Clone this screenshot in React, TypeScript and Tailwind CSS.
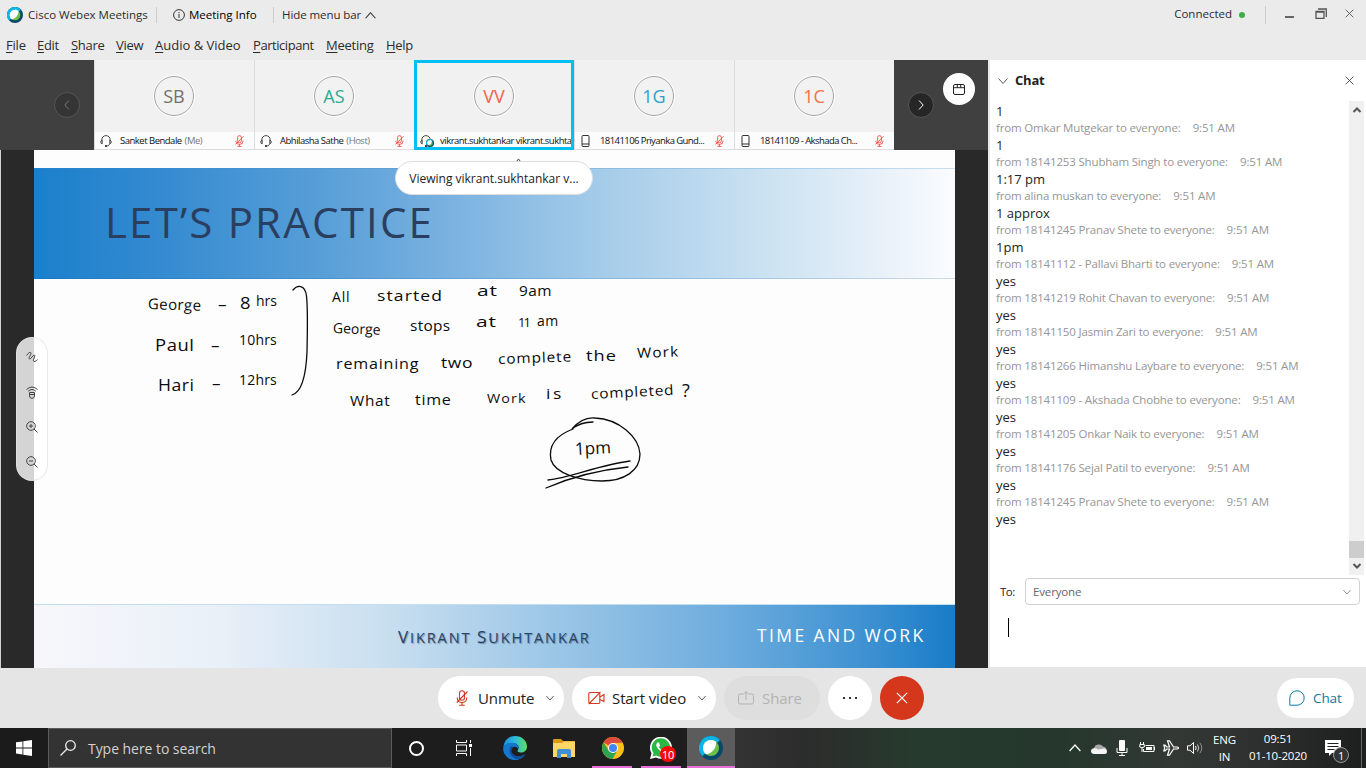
import React from "react";

type IconProps = { className?: string };

const WebexLogo = ({ className }: IconProps) => (
  <svg viewBox="0 0 24 24" className={className}>
    <circle cx="12" cy="12" r="12" fill="#07486b" />
    <path d="M12 0A12 12 0 0 0 3.2 20.2L21 4A12 12 0 0 0 12 0Z" fill="#0ab6e8" />
    <circle cx="12" cy="12" r="8" fill="#6cc04a" />
    <path d="M4 12a8 8 0 0 1 8-8c2.500 0 4.500 1 5 2 1 5-4 12-10 12.200C5 17 4 14.500 4 12Z" fill="#fff" />
  </svg>
);

const Chevron = ({ className, d }: IconProps & { d: string }) => (
  <svg viewBox="0 0 10 10" className={className} fill="none" stroke="currentColor">
    <path d={d} />
  </svg>
);
const UP = "M0.500 7.500 5 2.500 9.500 7.500";
const DOWN = "M0.500 2.500 5 7.500 9.500 2.500";
const LEFT = "M7 0.500 2.800 5 7 9.500";
const RIGHT = "M3 0.500 7.200 5 3 9.500";
const CROSS = "M0.700 0.700 9.300 9.300M9.300 0.700 0.700 9.300";

const Mic = ({ className }: IconProps) => (
  <svg viewBox="0 0 12 16" className={className} fill="none" stroke="currentColor" strokeWidth="1.100">
    <rect x="3.500" y="0.800" width="5" height="9.500" rx="2.500" />
    <path d="M1.300 7.500v1A4.700 4 0 0 0 10.700 8.500v-1M6 12.500V15M3.200 15.200h5.600M0.800 12.500 11.500 1.500" />
  </svg>
);

const Headset = ({ className }: IconProps) => (
  <svg viewBox="0 0 12 12" className={className} fill="none" stroke="currentColor">
    <path d="M1.800 6V4.800a4.200 4.200 0 0 1 8.400 0V6" />
    <path d="M2.200 5.200C.3 5.200.3 8.800 2.200 8.800ZM9.800 5.200c1.900 0 1.900 3.600 0 3.600ZM9.600 8.800C9 10.500 8 11 6.500 11" />
    <path d="M5 11h2" strokeWidth="1.800" />
  </svg>
);

const Phone = ({ className }: IconProps) => (
  <svg viewBox="0 0 9 12" className={className} fill="none" stroke="currentColor">
    <rect x="1" y="0.500" width="7" height="11" rx="1" />
    <path d="M1 9h7" />
  </svg>
);

type Person = {
  initials: string;
  color: string;
  name: string;
  role?: string;
  device: "headset" | "phone";
  active?: boolean;
};

const people: Person[] = [
  { initials: "SB", color: "text-[#707070]", name: "Sanket Bendale", role: "(Me)", device: "headset" },
  { initials: "AS", color: "text-[#2bab8f]", name: "Abhilasha Sathe", role: "(Host)", device: "headset" },
  { initials: "VV", color: "text-[#f5604f]", name: "vikrant.sukhtankar vikrant.sukhta...", device: "headset", active: true },
  { initials: "1G", color: "text-[#2f9fd8]", name: "18141106 Priyanka Gund...", device: "phone" },
  { initials: "1C", color: "text-[#fa7343]", name: "18141109 - Akshada Ch...", device: "phone" },
];

const Tile = ({ p }: { p: Person }) => (
  <div className="relative flex h-[90px] w-40 shrink-0 flex-col border-b border-l border-[#dcdcdc] bg-[#f1f1f1]">
    <div className="flex h-[72px] items-center justify-center pr-px">
      <div className="flex size-10 items-center justify-center rounded-full border border-[#a5a5a5] bg-[#f2f2f2] ring-1 ring-white">
        <span className={`text-[18px] leading-none ${p.color}`}>{p.initials}</span>
      </div>
    </div>
    <div className="flex h-[17px] items-center bg-[#fcfcfc] pt-px pr-[10px] pl-[5px] text-[#111]">
      {p.device === "headset" ? (
        <Headset className="size-3 shrink-0 text-[#444]" />
      ) : (
        <Phone className="ml-px h-3 w-[9px] shrink-0 text-[#333]" />
      )}
      <span
        className={
          p.device === "phone"
            ? "ml-[10px] pt-px text-[9.500px] tracking-[-0.570px] whitespace-nowrap"
            : "ml-[8px] pt-px text-[9.500px] tracking-[-0.500px] whitespace-nowrap"
        }
      >
        {p.name} {p.role && <span className="ml-px text-[#777]">{p.role}</span>}
      </span>
      {!p.active && <Mic className="ml-auto h-3 w-[9px] shrink-0 text-[#f0413c]" />}
    </div>
    {p.active && (
      <>
        <WebexLogo className="absolute bottom-[2px] left-[11px] size-[8px]" />
        <div className="absolute inset-0 -bottom-px -left-px border-[3px] border-[#00bff2]" />
      </>
    )}
  </div>
);

const ink: [string, string][] = [
  ["George", "left-[114px] top-[143px] text-[15px] tracking-[0.400px] rotate-2"],
  ["–", "left-[184px] top-[144px] text-[17px]"],
  ["8", "left-[206px] top-[143px] text-[16px] scale-x-115"],
  ["hrs", "left-[222px] top-[141px] text-[14px]"],
  ["Paul", "left-[121px] top-[185px] text-[16px] scale-x-115 tracking-[0.500px]"],
  ["–", "left-[177px] top-[185px] text-[17px]"],
  ["10hrs", "left-[205px] top-[180px] text-[14px] tracking-[0.200px]"],
  ["Hari", "left-[124px] top-[225px] text-[16px] scale-x-110 tracking-[0.500px]"],
  ["–", "left-[178px] top-[223px] text-[17px]"],
  ["12hrs", "left-[205px] top-[220px] text-[14px] tracking-[0.200px]"],
  ["All", "left-[298px] top-[137px] text-[14px] tracking-[0.800px]"],
  ["started", "left-[343px] top-[136px] text-[14px] scale-x-125 tracking-[0.900px]"],
  ["at", "left-[443px] top-[131px] text-[14px] scale-x-150 tracking-[0.600px]"],
  ["9am", "left-[485px] top-[131px] text-[14px] scale-x-110 tracking-[0.400px]"],
  ["George", "left-[299px] top-[168px] text-[14px] rotate-2"],
  ["stops", "left-[376px] top-[166px] text-[14px] scale-x-110 tracking-[0.300px]"],
  ["at", "left-[442px] top-[162px] text-[14px] scale-x-150 tracking-[0.600px]"],
  ["11", "left-[484px] top-[162px] text-[13px] tracking-[-2px]"],
  ["am", "left-[503px] top-[161px] text-[14px] tracking-[0.500px]"],
  ["remaining", "left-[302px] top-[204px] text-[14px] scale-x-115 tracking-[0.700px]"],
  ["two", "left-[407px] top-[203px] text-[14px] scale-x-125 tracking-[0.500px]"],
  ["complete", "left-[464px] top-[199px] text-[14px] scale-x-110 tracking-[0.800px] -rotate-2"],
  ["the", "left-[552px] top-[196px] text-[14px] scale-x-130 tracking-[0.800px]"],
  ["Work", "left-[603px] top-[193px] text-[14px] scale-x-110 tracking-[1px] -rotate-2"],
  ["What", "left-[316px] top-[241px] text-[14px] scale-x-110 tracking-[0.600px]"],
  ["time", "left-[381px] top-[240px] text-[14px] scale-x-115 tracking-[0.600px]"],
  ["Work", "left-[453px] top-[238px] text-[13px] scale-x-110 tracking-[1px]"],
  ["is", "left-[512px] top-[234px] text-[14px] scale-x-125 tracking-[2px]"],
  ["completed", "left-[557px] top-[234px] text-[14px] scale-x-110 tracking-[0.700px] -rotate-3"],
  ["?", "left-[648px] top-[230px] text-[18px]"],
  ["1pm", "left-[541px] top-[289px] text-[17px] -rotate-3"],
];

const Slide = () => (
  <div className="relative flex w-[921px] shrink-0 flex-col bg-[#fdfdfd]">
    <div className="h-[18px]" />
    <div className="flex h-[111px] items-center bg-[linear-gradient(90deg,#1a80cc_0%,#3189d0_12%,#559dd7_30%,#7cb3e1_46%,#a3cbe9_61%,#c8e0f1_78%,#eaf2fa_93%,#fbfcfe_100%)] pb-[4px] pl-[71px] shadow-[inset_0_1px_0_rgba(60,140,200,0.25),inset_0_-1px_0_rgba(20,90,160,0.2)]">
      <h1 className="text-[42px] leading-none tracking-[2.200px] whitespace-nowrap text-[#2a3f60]">LET’S PRACTICE</h1>
    </div>
    <div className="flex-1" />
    <div className="flex h-[64px] items-center border-t border-[#c5deef] bg-[linear-gradient(90deg,#f7f7fb_0%,#e9f0f8_20%,#c9dff0_38%,#9dc7e7_56%,#6eadde_75%,#3f92d2_90%,#187cc8_100%)] text-[#2b4363]">
      <div className="ml-[364px] w-[359px] text-[14.500px] leading-none tracking-[1.900px] whitespace-nowrap [text-shadow:1px_1px_1px_rgba(40,70,110,0.5)]">
        <span className="text-[17px]">V</span>IKRANT <span className="text-[17px]">S</span>UKHTANKAR
      </div>
      <div className="pb-px text-[17.500px] leading-none tracking-[2.400px] whitespace-nowrap text-white">TIME AND WORK</div>
    </div>
    {ink.map(([word, cls], i) => (
      <span key={i} className={`absolute origin-left leading-[20px] font-medium whitespace-nowrap text-[#0b0b0b] ${cls}`}>
        {word}
      </span>
    ))}
    <svg className="absolute top-0 left-0" width="921" height="518" fill="none" stroke="#0b0b0b" strokeWidth="1.300" strokeLinecap="round">
      <path d="M259 140C263 135 271 134 272.500 146C274 160 273.500 175 273 202C272 225 268 242 258 245" />
      <path d="M539 279C523 285 514 295 517 310C521 323 545 331 568 331C590 331 606 321 606 304C605 287 585 269 561 268C551 267 543 273 538 279C544 274 552 272 559 272" />
      <path d="M514 330C535 328 565 315 596 311M512 338C535 328 565 320 594 317" />
    </svg>
  </div>
);

const ToolPill = () => (
  <div className="absolute top-[187px] left-[15px] flex h-36 w-8 flex-col items-center justify-between rounded-full border border-[#e4e4e4]/80 bg-white/80 pt-[13px] pb-[12px] text-[#444]">
    <svg viewBox="0 0 12 12" className="size-3" fill="none" stroke="currentColor">
      <path d="M0.500 4.500C3 1 5 .5 5 2.500 5 4 2 7 3.500 8 5 8.500 7 3.500 8.500 4 10 4.500 6 9.500 8 10.500c1.200.300 2.500-.8 3.500-2" />
    </svg>
    <svg viewBox="0 0 12 13" className="h-[13px] w-3" fill="none" stroke="currentColor">
      <path d="M.5 3.500Q6-1.500 11.500 3.500M2.200 5.200Q6 1.800 9.800 5.200M3.500 6.500h5V10q0 2.300-2.500 2.300T3.500 10ZM3.500 8.500h5" />
    </svg>
    <svg viewBox="0 0 12 12" className="size-3" fill="none" stroke="currentColor">
      <circle cx="5" cy="5" r="4.300" />
      <path d="M8 8 11.500 11.500M3 5h4M5 3v4" />
    </svg>
    <svg viewBox="0 0 12 12" className="size-3" fill="none" stroke="currentColor">
      <circle cx="5" cy="5" r="4.300" />
      <path d="M8 8 11.500 11.500M3 5h4" />
    </svg>
  </div>
);

const chat: [string, string][] = [
  ["Omkar Mutgekar", "1"],
  ["18141253 Shubham Singh", "1:17 pm"],
  ["alina muskan", "1 approx"],
  ["18141245 Pranav Shete", "1pm"],
  ["18141112 - Pallavi Bharti", "yes"],
  ["18141219 Rohit Chavan", "yes"],
  ["18141150 Jasmin Zari", "yes"],
  ["18141266 Himanshu Laybare", "yes"],
  ["18141109 - Akshada Chobhe", "yes"],
  ["18141205 Onkar Naik", "yes"],
  ["18141176 Sejal Patil", "yes"],
  ["18141245 Pranav Shete", "yes"],
];

const ChatPanel = () => (
  <aside className="flex h-[607px] flex-1 flex-col border-l-2 border-[#ebebeb] bg-white">
    <header className="flex h-[41px] items-center pr-3 pl-2">
      <Chevron d={DOWN} className="size-[10px] text-[#555]" />
      <span className="ml-[7px] text-[13px] font-bold tracking-[-0.200px] text-[#222]">Chat</span>
      <Chevron d={CROSS} className="ml-auto size-[9px] text-[#444]" />
    </header>
    <div className="flex h-[474px]">
      <div className="flex-1 pt-px pl-[6px] whitespace-nowrap">
        <p className="h-[18px] text-[13px] leading-[18px] text-[#222]">1</p>
        {chat.map(([who, msg], i) => (
          <React.Fragment key={i}>
            <p className="flex h-4 text-[11.500px] leading-[15px] tracking-[-0.160px] text-[#969696]">
              from {who} to everyone:<span className="ml-3">9:51 AM</span>
            </p>
            <p className="h-[18px] text-[13px] leading-[18px] text-[#222]">{msg}</p>
          </React.Fragment>
        ))}
      </div>
      <div className="mr-[2px] flex w-[15px] flex-col items-center bg-[#f0f0f0]">
        <Chevron d="M1.500 7 5 3.500 8.500 7" className="mt-1 size-[10px] stroke-2 text-[#555]" />
        <div className="mt-auto h-[17px] w-full bg-[#cdcdcd]" />
        <Chevron d="M1.500 3 5 6.500 8.500 3" className="mt-[3px] mb-1 size-[10px] stroke-2 text-[#555]" />
      </div>
    </div>
    <div className="mt-[3px] flex h-[27px] items-center pr-[6px] pl-[10px]">
      <span className="w-[25px] text-[11.500px] tracking-[-0.500px] text-[#222]">To:</span>
      <div className="flex h-[27px] flex-1 items-center justify-between rounded border border-[#d0d0d0] px-[7px] pr-2">
        <span className="text-[11.500px] tracking-[-0.150px] text-[#666]">Everyone</span>
        <Chevron d={DOWN} className="size-2 text-[#777]" />
      </div>
    </div>
    <div className="mt-[13px] ml-[18px] h-[19px] w-px bg-black" />
  </aside>
);

const menu: [string, string][] = [
  ["File", "w-[31px] tracking-[-0.200px]"],
  ["Edit", "w-[34px] tracking-[-0.300px]"],
  ["Share", "w-[45px] tracking-[-0.300px]"],
  ["View", "w-[39px] tracking-[-0.300px]"],
  ["Audio & Video", "w-[98px]"],
  ["Participant", "w-[73px] tracking-[-0.450px]"],
  ["Meeting", "w-[60px] tracking-[-0.250px]"],
  ["Help", "w-[40px] tracking-[-0.300px]"],
];

const Header = () => (
  <header className="h-[60px] shrink-0 bg-[#ebebeb] text-[#2b2b2b]">
    <div className="flex h-[30px] items-center text-[11.500px] whitespace-nowrap">
      <WebexLogo className="ml-[7px] size-4" />
      <span className="ml-[5px] w-[128px]">Cisco Webex Meetings</span>
      <div className="h-4 w-px bg-[#ccc]" />
      <svg viewBox="0 0 12 12" className="ml-[16px] size-3" fill="none" stroke="#333">
        <circle cx="6" cy="6" r="5.400" />
        <path d="M6 5v4M6 3v1.200" />
      </svg>
      <span className="ml-1 w-[84px] font-medium text-black">Meeting Info</span>
      <div className="h-4 w-px bg-[#ccc]" />
      <span className="ml-2 tracking-[-0.080px]">Hide menu bar</span>
      <Chevron d={UP} className="ml-1 size-[11px]" />
      <span className="ml-auto pb-[2px]">Connected</span>
      <span className="ml-[7px] size-[6px] rounded-full bg-[#3fae49]" />
      <div className="ml-[20px] h-[18px] w-px bg-[#ccc]" />
      <div className="mt-[4px] ml-[19px] h-[2px] w-[9px] bg-[#666]" />
      <svg viewBox="0 0 12 11" className="mb-[3px] ml-[21px] h-[11px] w-3" fill="none" stroke="#555">
        <path d="M1 3.500h8v7H1ZM1 4h8M3 1h8.300v8" strokeWidth="1.300" />
      </svg>
      <Chevron d={CROSS} className="mr-3 mb-[3px] ml-[18px] size-[9px] text-[#555]" />
    </div>
    <nav className="flex h-[30px] items-center pt-[2px] pl-[6px] text-[13px] whitespace-nowrap">
      {menu.map(([label, w]) => (
        <span key={label} className={w}>
          <span className="underline underline-offset-2">{label[0]}</span>
          {label.slice(1)}
        </span>
      ))}
    </nav>
  </header>
);

const Controls = () => (
  <div className="relative flex h-[60px] shrink-0 items-center gap-2 bg-[#e5e5e5] pr-3 pl-[438px] text-[15px] tracking-[-0.100px] whitespace-nowrap text-[#222]">
    <button className="flex h-11 w-[126px] items-center rounded-full bg-white pl-[18px]">
      <Mic className="h-4 w-3 text-[#d4371c]" />
      <span className="ml-[10px] flex-1 text-left">Unmute</span>
      <Chevron d={DOWN} className="mr-[10px] size-2 text-[#333]" />
    </button>
    <button className="flex h-11 w-36 items-center rounded-full bg-white pl-4">
      <svg viewBox="0 0 17 14" className="h-[14px] w-[17px]" fill="none" stroke="#d4371c" strokeWidth="1.100">
        <rect x="0.800" y="1.500" width="11" height="11" rx="1.200" />
        <path d="M12 6 16 3.500v7L12 8.500M.8 13 12.500.8" />
      </svg>
      <span className="ml-[7px] flex-1 text-left">Start video</span>
      <Chevron d={DOWN} className="mr-[10px] size-2 text-[#333]" />
    </button>
    <button className="flex h-11 w-24 items-center rounded-full bg-[#dedede] pl-[14px] text-[#b3b3b3]">
      <svg viewBox="0 0 16 16" className="size-4" fill="none" stroke="currentColor">
        <path d="M5 4H2Q.5 4 .5 5.500v7Q.5 14 2 14h12q1.500 0 1.500-1.500v-7Q15.500 4 14 4h-3M8 10V1.500M5 4.500 8 1.500l3 3" />
      </svg>
      <span className="ml-2">Share</span>
    </button>
    <button className="flex size-11 items-center justify-center gap-1 rounded-full bg-white">
      <i className="size-[2px] bg-[#333]" />
      <i className="size-[2px] bg-[#333]" />
      <i className="size-[2px] bg-[#333]" />
    </button>
    <button className="flex size-11 items-center justify-center rounded-full bg-[#d4371c] text-white">
      <Chevron d={CROSS} className="size-[12px]" />
    </button>
    <button className="ml-auto flex h-10 w-[77px] items-center rounded-full bg-white pl-3 text-[13.500px] text-[#0c7ba1]">
      <svg viewBox="0 0 16 16" className="size-4" fill="none" stroke="currentColor">
        <path d="M.8 15.200V8A7.200 7.200 0 1 1 8 15.200Z" />
      </svg>
      <span className="ml-2">Chat</span>
    </button>
  </div>
);

const Taskbar = () => (
  <footer className="flex h-10 shrink-0 bg-[linear-gradient(90deg,#1b1b1b_0%,#1e1e1e_50%,#333_54%,#2c2c2c_59%,#263a2d_67%,#26382d_78%,#333835_86%,#2e302f_92%,#1d1f1e_100%)] text-white">
    <div className="flex w-12 items-center justify-center">
      <svg viewBox="0 0 16 16" className="size-4" fill="#fff">
        <path d="M0 2.300 6.500 1.400V7.500H0ZM7.300 1.300 16 0V7.500H7.300ZM0 8.400H6.500V14.500L0 13.600ZM7.300 8.400H16V16L7.300 14.700Z" />
      </svg>
    </div>
    <div className="flex h-10 w-[344px] items-center border border-[#5c5c5c] bg-[#333] pl-[11px]">
      <svg viewBox="0 0 16 16" className="size-4" fill="none" stroke="#eee" strokeWidth="1.300">
        <circle cx="10.500" cy="5.500" r="4.800" />
        <path d="M7 9 .5 15.500" />
      </svg>
      <span className="ml-3 text-[14px] tracking-[-0.050px] text-[#d2d2d2]">Type here to search</span>
    </div>
    <div className="flex w-12 items-center justify-center">
      <div className="size-[15px] rounded-full border-2 border-white" />
    </div>
    <div className="flex w-[51px] items-center pl-4">
      <svg viewBox="0 0 17 16" className="h-4 w-[17px]" fill="none" stroke="#fff">
        <path d="M.5 0v2.500h10V0M.5 16v-2.500h10V16M.5 5h10v6H.5ZM14.500 0v3M14.500 8v8" />
        <rect x="13" y="4" width="3" height="3" fill="#fff" stroke="none" />
      </svg>
    </div>
    <div className="flex w-[48px] items-center justify-center">
      <svg viewBox="0 0 24 24" className="size-6">
        <defs>
          <linearGradient id="edgeTop" x1="0" x2="1">
            <stop offset="0" stopColor="#1b8fe0" />
            <stop offset=".5" stopColor="#2cbce0" />
            <stop offset="1" stopColor="#5fe05a" />
          </linearGradient>
        </defs>
        <path d="M0.500 10C1.500 3.500 6.500 0 12 0c7 0 12 5 12 10.500 0 4-3 6-6.200 6-2.800 0-4-1-3-2.200C17 11 14.500 7 10 7 5 7 1 9 .5 12Z" fill="url(#edgeTop)" />
        <path d="M.2 12C1 8.500 5 6.500 9.500 6.800 14 7 16 10.500 15 13c-1-2.500-4-3-6-1C6.500 15 9 20 14.500 20.500c3 .200 5.500-.8 7.800-2.500C20 22 16 24 12 24 5 24-.3 18.500.2 12Z" fill="#1578cf" />
        <path d="M9.500 9.500C6 11 5.500 17 9 20.500c2 2 5 3 7.500 2.500 2.500-.7 4.800-2.700 5.800-5-2.500 1.700-5 2.400-7.800 2.200C9.500 19.500 7 15 9.500 12Z" fill="#0f4f9e" />
      </svg>
    </div>
    <div className="flex w-[49px] items-center justify-center">
      <svg viewBox="0 0 22 19" className="h-[19px] w-[22px]">
        <path d="M0 1Q0 0 1 0H8l2 2H21q1 0 1 1V18H0Z" fill="#d99a1c" />
        <path d="M0 4H9l2-1.500H22V18H0Z" fill="#fcd667" />
        <path d="M4 19V12q0-2 2-2H16q2 0 2 2v7H14V15H8v4Z" fill="#3f8fd8" />
      </svg>
    </div>
    <div className="relative flex w-[49px] items-center justify-center">
      <svg viewBox="0 0 22 22" className="size-[22px]">
        <circle cx="11" cy="11" r="11" fill="#fbc116" />
        <path d="M11 11 1.500 5.500A11 11 0 0 1 20.600 5.800L11 6Z" fill="#dd4b3e" />
        <path d="M1.500 5.500A11 11 0 0 0 10.500 22L15.300 13.500 11 16 6.700 13.500Z" fill="#2fa352" />
        <circle cx="11" cy="11" r="5" fill="#fff" />
        <circle cx="11" cy="11" r="4" fill="#4285f4" />
      </svg>
      <div className="absolute bottom-0 left-[4px] h-[2px] w-10 bg-[#e86fdb]" />
    </div>
    <div className="relative flex w-[50px] items-center justify-center">
      <svg viewBox="0 0 22 22" className="mr-[2px] size-[22px]">
        <path d="M0 22 1.500 16.300A11 11 0 1 1 6 20.500Z" fill="#fff" />
        <path d="M2.600 19.400 3.500 16A9.200 9.200 0 1 1 6.300 18.500Z" fill="#2cb742" />
        <path d="M7.500 5.500c-3 2.500 0 6 2.500 8.200 2.500 2 5.500 2.800 6.800 0L14 12l-1.300 1.500C11 12.800 9.500 11.300 9 10l1-1.400-1-3Z" fill="#fff" />
      </svg>
      <div className="absolute top-[18px] left-[23px] flex size-4 items-center justify-center rounded-full bg-[#f50a0a] text-[11px] leading-none tracking-tight">10</div>
      <div className="absolute bottom-0 left-[4px] h-[2px] w-10 bg-[#e86fdb]" />
    </div>
    <div className="relative flex w-12 items-center justify-center bg-[#5c5c5c]">
      <WebexLogo className="size-6" />
      <div className="absolute bottom-0 left-0 h-[2px] w-12 bg-[#e86fdb]" />
    </div>
    <div className="ml-auto flex items-center text-[11.500px] leading-[17px] tracking-[-0.100px]">
      <Chevron d={UP} className="size-3" />
      <svg viewBox="0 0 16 11" className="ml-[10px] h-[11px] w-4">
        <path d="M3 5A5 4.500 0 0 1 12 3.500Q15.500 4 15.500 7L8 8Z" fill="#a9a9a9" />
        <path d="M3 11Q0 10.500 0 8t3.500-3q2 0 3.500 1.500L13 5.500q3 .5 3 3T13.500 11Z" fill="#f4f4f4" />
      </svg>
      <svg viewBox="0 0 12 16" className="ml-[9px] h-4 w-3">
        <rect x="3" width="6" height="11" rx="1" fill="#fff" />
        <path d="M1 8v4.500H11V8M6 12.500V15.500M3 15.500H9" fill="none" stroke="#fff" />
      </svg>
      <svg viewBox="0 0 16 12" className="ml-[11px] h-3 w-4" fill="none" stroke="#fff">
        <path d="M6.500 3.500H15v6H4.500V7M15.500 5v3M1.500 0v2M4.500 0v2M.8 2.500h4.500V5Q3 6.500.8 5ZM3 6v4" />
        <rect x="7" y="5" width="6" height="3" fill="#fff" stroke="none" />
      </svg>
      <svg viewBox="0 0 16 16" className="ml-2 size-4" fill="none" stroke="#fff" strokeWidth="1.200">
        <path d="M.8 5 2 5 3.800 7H6.500L4.500.8H6.500L10.500 7H14Q15.500 7 15.500 8T14 9H10.500L6.500 15.200H4.500L6.500 9H3.800L2 11H.8L1.700 8Z" />
      </svg>
      <svg viewBox="0 0 16 14" className="ml-2 h-[14px] w-4" fill="none" stroke="#fff">
        <path d="M.5 4.800H3L6.500 1.500v11L3 9.200H.5ZM8.500 5q1.200 2 0 4" />
        <path d="M10.500 3.500q2.500 3.500 0 7" opacity=".75" />
        <path d="M12.800 1.800q4 5.200 0 10.400" opacity=".45" />
      </svg>
      <div className="ml-[8px] w-[27px] pb-px text-center tracking-[-0.200px]">
        ENG
        <br />
        IN
      </div>
      <div className="ml-[6px] w-[68px] pb-[2px] text-center tracking-[-0.200px] whitespace-nowrap">
        09:51
        <br />
        01-10-2020
      </div>
      <div className="relative ml-[13px] h-4 w-[36px]">
        <svg viewBox="0 0 16 16" className="size-4">
          <path d="M0 0H16V13H7L4 16V13H0Z" fill="#fff" />
          <path d="M2.500 3.500h11M2.500 6.500h11M2.500 9.500h7" stroke="#222" />
        </svg>
        <div className="absolute top-[7px] left-2 flex size-4 items-center justify-center rounded-full border border-[#999] bg-[#333] text-[11px] leading-none">1</div>
      </div>
      <div className="h-10 w-[5px] border-l border-[#666]" />
    </div>
  </footer>
);

export default function App() {
  return (
    <div className="flex h-[768px] w-[1366px] flex-col overflow-hidden bg-[#e5e5e5] font-['Open_Sans','Noto_Sans',sans-serif]">
      <Header />
      <main className="flex h-[608px] shrink-0">
        <section className="flex w-[988px] shrink-0 flex-col">
          <div className="flex h-[90px] bg-[#404040]">
            <div className="flex w-[94px] items-center justify-end pr-[14px]">
              <div className="flex size-[26px] items-center justify-center rounded-full border border-[#555] bg-[#353535] text-[#777]">
                <Chevron d={LEFT} className="size-[10px]" />
              </div>
            </div>
            {people.map((p) => (
              <Tile key={p.initials} p={p} />
            ))}
            <div className="flex flex-1 items-center pl-[14px]">
              <div className="flex size-[26px] items-center justify-center rounded-full border border-[#555] bg-[#262626] text-white">
                <Chevron d={RIGHT} className="size-[10px]" />
              </div>
              <div className="mb-8 ml-[9px] flex size-8 items-center justify-center rounded-full bg-white">
                <svg viewBox="0 0 12 11" className="h-[11px] w-3" fill="none" stroke="#222">
                  <rect x="0.500" y="0.500" width="11" height="10" rx="1.500" />
                  <path d="M.5 3.700h11M4.300.5v3M7.700.5v3" />
                </svg>
              </div>
            </div>
          </div>
          <div className="relative flex h-[518px] border-l border-[#d0d0d0] bg-[#292929] pl-[33px]">
            <Slide />
            <ToolPill />
            <Chevron d="M1 7 5 2 9 7M2 8h6" className="absolute top-[8px] left-[515px] size-[5px] stroke-2 text-[#444]" />
            <div className="absolute top-[11px] left-[394px] flex h-[34px] w-[198px] items-center justify-center rounded-full border border-[#ddd] bg-white pt-[2px] text-[12px] whitespace-nowrap text-[#222]">
              Viewing vikrant.sukhtankar v...
            </div>
          </div>
        </section>
        <ChatPanel />
      </main>
      <Controls />
      <Taskbar />
    </div>
  );
}
